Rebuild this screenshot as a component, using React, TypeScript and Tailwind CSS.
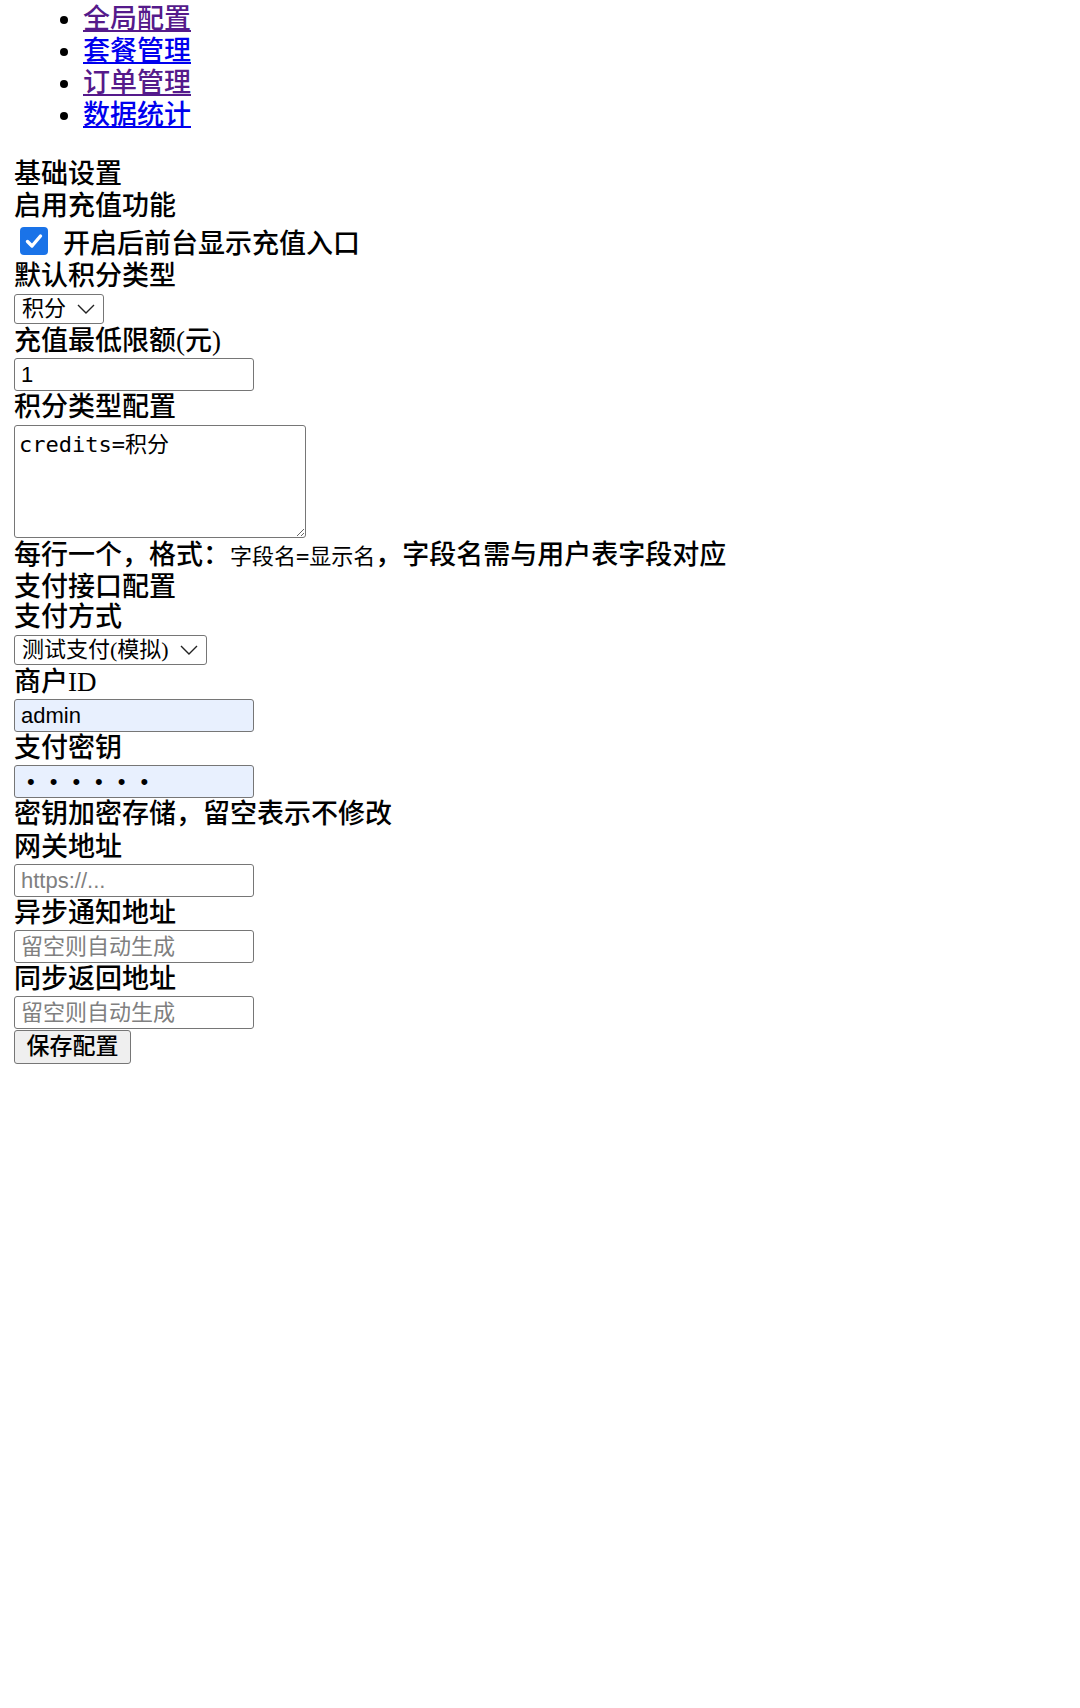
import { ReactNode } from 'react'

const navLinks = [
  { label: '全局配置', visited: true },
  { label: '套餐管理', visited: false },
  { label: '订单管理', visited: true },
  { label: '数据统计', visited: false },
]

function Label({ children }: { children: ReactNode }) {
  return <div className="h-[33px] leading-[33px] whitespace-nowrap">{children}</div>
}

function Chevron() {
  return (
    <svg
      className="pointer-events-none absolute top-[10px] right-[9px] h-[10px] w-[18px]"
      viewBox="0 0 18 10"
      fill="none"
      stroke="#222"
      strokeWidth={1.4}
    >
      <path d="M1 1l8 8 8-8" />
    </svg>
  )
}

function Select({ width, options }: { width: string; options: string[] }) {
  return (
    <div className={`relative mt-[2px] mb-[1px] flex h-[30px] ${width}`}>
      <select className="h-[30px] w-full appearance-none rounded-[3px] border border-[#767676] bg-white py-0 pl-[7px] text-[22px] font-normal leading-[26px] text-black">
        {options.map((o) => (
          <option key={o}>{o}</option>
        ))}
      </select>
      <Chevron />
    </div>
  )
}

const inputCls =
  'block h-[33px] w-[240px] rounded-[3px] border border-[#767676] px-[6px] text-[22px] font-normal text-black placeholder:text-[#808080] font-["Liberation_Sans","Noto_Sans_CJK_SC",sans-serif]'

export default function App() {
  return (
    <div className='min-h-[1708px] bg-white px-[14px] text-[27px] font-medium text-black font-["Liberation_Serif","Noto_Sans_CJK_SC",serif]'>
      <ul className="mt-[3px] list-disc pl-[69px]">
        {navLinks.map((l) => (
          <li key={l.label} className="h-[32px] leading-[32px]">
            <a href="#" className={`underline ${l.visited ? 'text-[#551a8b]' : 'text-[#0000ee]'}`}>
              {l.label}
            </a>
          </li>
        ))}
      </ul>

      <form className="mt-[27px] flex flex-col items-start" onSubmit={(e) => e.preventDefault()}>
        <div className="h-[32px] leading-[32px]">基础设置</div>
        <div className="h-[32px] leading-[32px]">启用充值功能</div>
        <label className="flex h-[38px] items-center">
          <span className="ml-[6px] flex h-[28px] w-[28px] items-center justify-center rounded-[4px] bg-[#1a73e8]">
            <svg viewBox="0 0 20 20" className="h-[20px] w-[20px]" fill="none" stroke="#fff" strokeWidth={3.4}>
              <path d="M3.5 10.5l4.5 4.5 8.5-10" strokeLinecap="round" strokeLinejoin="round" />
            </svg>
          </span>
          <span className="mt-[5px] ml-[15px] leading-[32px]">开启后前台显示充值入口</span>
        </label>
        <div className="h-[32px] leading-[32px]">默认积分类型</div>
        <Select width="w-[90px]" options={['积分']} />

        <Label>充值最低限额(元)</Label>
        <input className={inputCls} defaultValue="1" />
        <div className="h-[32px] leading-[32px]">积分类型配置</div>
        <textarea
          className='mt-[2px] block h-[113px] w-[292px] rounded-[3px] border border-[#767676] px-[4px] py-[4px] text-[22px] leading-[30px] font-normal text-black font-["DejaVu_Sans_Mono","Noto_Sans_CJK_SC",monospace]'
          defaultValue="credits=积分"
        />
        <div className="h-[33px] leading-[34px] whitespace-nowrap">
          每行一个，格式：
          <code className='text-[22px] font-normal font-["DejaVu_Sans_Mono","Noto_Sans_CJK_SC",monospace]'>字段名=显示名</code>
          ，字段名需与用户表字段对应
        </div>

        <div className="h-[31px] leading-[32px]">支付接口配置</div>
        <div className="h-[31px] leading-[31px]">支付方式</div>
        <Select width="w-[193px]" options={['测试支付(模拟)']} />
        <Label>商户ID</Label>
        <input className={`${inputCls} bg-[#e8f0fe] text-[20px]`} defaultValue="admin" />
        <Label>支付密钥</Label>
        <input
          type="password"
          className={`${inputCls} bg-[#e8f0fe] pl-[12px] tracking-[15px]`}
          defaultValue="123456"
        />
        <Label>密钥加密存储，留空表示不修改</Label>
        <Label>网关地址</Label>
        <input className={inputCls} placeholder="https://..." />
        <Label>异步通知地址</Label>
        <input className={inputCls} placeholder="留空则自动生成" />
        <Label>同步返回地址</Label>
        <input className={inputCls} placeholder="留空则自动生成" />
        <button
          type="submit"
          className="mt-[1px] h-[34px] w-[117px] rounded-[3px] border border-[#767676] bg-[#efefef] text-[23px] leading-[32px] text-black"
        >
          保存配置
        </button>
      </form>
    </div>
  )
}
